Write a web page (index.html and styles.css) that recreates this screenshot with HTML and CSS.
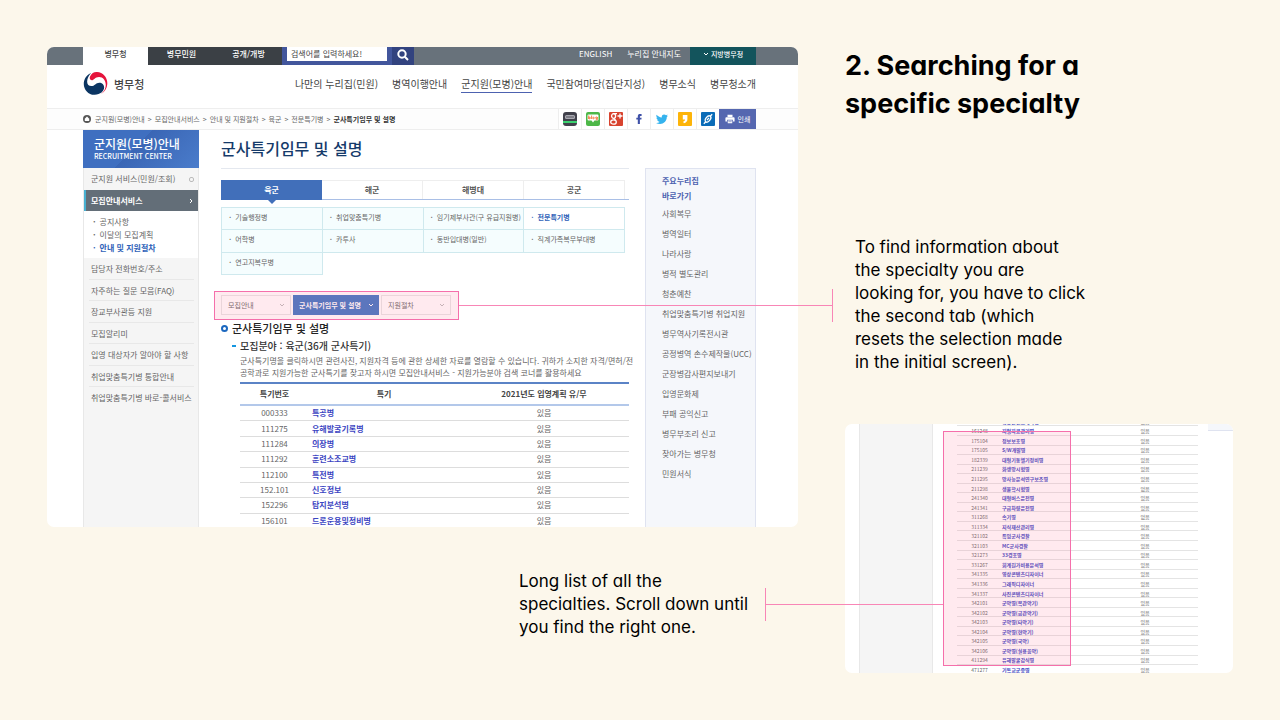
FILE: index.html
```html
<!DOCTYPE html>
<html lang="ko">
<head>
<meta charset="utf-8">
<title>Searching for a specific specialty</title>
<link rel="stylesheet" href="styles.css">
</head>
<body>
<main class="slide" lang="en">
  <div class="col-left">
    <div class="frame">
      <div class="card site" lang="ko">
        <div class="topbar">
          <nav class="top-tabs"><a class="on" href="#">병무청</a><a href="#">병무민원</a><a href="#">공개/개방</a></nav>
          <form class="search">
            <input type="text" aria-label="검색어" placeholder="검색어를 입력하세요!">
            <button type="button" aria-label="검색"><svg viewBox="0 0 12 12"><circle cx="5" cy="5" r="3.7"/><path d="M7.8 7.8L11 11"/></svg></button>
          </form>
          <nav class="util"><a href="#">ENGLISH</a><a href="#">누리집 안내지도</a></nav>
          <button class="region" type="button"><svg class="chev" viewBox="0 0 6 6"><path d="M1 2l2 2 2-2"/></svg>지방병무청</button>
        </div>
        <header class="masthead">
          <a class="logo" href="#">
            <svg viewBox="0 0 26 26"><path fill="#0b3562" d="M8.500 2.200C3.800 4 .8 8.600.8 13.400c0 6 4.800 11.200 10.900 11.400 6.200.2 10.300-3.800 10.300-7.800 0-2.900-2.300-4.900-5-4.900-3.800 0-4.700 3.600-8.400 3.600-2.500 0-4.300-2-4.300-4.600C4.300 7.800 6.200 4.400 8.500 2.200z"/><path fill="#e5143c" d="M7.300 5.800C9 2.200 11.500.8 14.600 1 20.600 1.300 25.300 6.300 25.300 12.600c0 4.900-2.500 9-6.500 11.400 3-2.800 4.900-5.800 4.900-9.500 0-4.700-2.900-8.300-7-8.300-4.500 0-5.200 3.400-7.600 3.400-1.900 0-2.500-1.900-1.800-3.800z"/></svg>
            <span>병무청</span>
          </a>
          <nav class="gnb"><a href="#">나만의 누리집(민원)</a><a href="#">병역이행안내</a><a class="on" href="#">군지원(모병)안내</a><a href="#">국민참여마당(집단지성)</a><a href="#">병무소식</a><a href="#">병무청소개</a></nav>
        </header>
        <div class="crumbbar">
          <svg class="home" viewBox="0 0 8 8"><circle cx="4" cy="4" r="4"/><path d="M4 1.600L1.800 3.700v2.200h4.400V3.700z"/></svg>
          <nav class="crumbs"><a href="#">군지원(모병)안내</a><i>&gt;</i><a href="#">모집안내서비스</a><i>&gt;</i><a href="#">안내 및 지원절차</a><i>&gt;</i><a href="#">육군</a><i>&gt;</i><a href="#">전문특기병</a><i>&gt;</i><b>군사특기임무 및 설명</b></nav>
          <div class="share">
            <button type="button" aria-label="SMS"><svg viewBox="0 0 14 14"><rect width="14" height="14" rx="3" fill="#41414b"/><rect x="2" y="3" width="10" height="4" rx="1.500" fill="#aaaab2"/><path d="M3 5h8" stroke="#55555e"/><rect y="9" width="14" height="2" fill="#3bd16f"/></svg></button>
            <button type="button" aria-label="Blog"><svg viewBox="0 0 14 14"><rect width="14" height="14" rx="2" fill="#4db748"/><path fill="#fff" d="M2.500 2.500h9q1 0 1 1v4q0 1-1 1H8.500L7 10.500 5.500 8.500h-3q-1 0-1-1v-4q0-1 1-1z"/><g fill="none" stroke="#f26522" stroke-width=".8"><path d="M2.700 3.500V7M5.600 3.500V7M11.300 5v2.800h-1.500"/><circle cx="3.600" cy="6" r=".8"/><circle cx="7.500" cy="6" r=".8"/><circle cx="10.400" cy="5.800" r=".8"/></g></svg></button>
            <button type="button" aria-label="Google+"><svg viewBox="0 0 14 14"><rect width="14" height="14" rx="1" fill="#d8432f"/><g fill="none" stroke="#fff" stroke-width="1.300"><ellipse cx="4.600" cy="4" rx="2" ry="2.300"/><ellipse cx="4.500" cy="10" rx="2.800" ry="2.200"/><path d="M4 1.600h4M5 6.300l1.500 2M11 1.500v5M8.500 4h5"/></g></svg></button>
            <button type="button" aria-label="Facebook"><svg viewBox="0 0 14 14"><path fill="#3f51a8" d="M5.800 12V7.600H4.300V5.700h1.500V4.300C5.800 2.600 6.700 2 8 2h1.600v1.900H8.700c-.6 0-.8.2-.8.7v1.100h1.700l-.2 1.900H7.900V12z"/></svg></button>
            <button type="button" aria-label="Twitter"><svg viewBox="0 0 14 14"><path fill="#35b3ee" d="M1.500 2.800c1.400 1.600 3.100 2.500 5.300 2.600-.3-1.800.8-3 2.300-3 .8 0 1.400.3 1.900.8l1.700-.6-1 1.500 1.400-.3-1.300 1.300c0 4.200-3.100 6.900-6.700 6.900-1.500 0-2.900-.4-4.100-1.100 1.400.1 2.600-.3 3.600-1-1.100-.1-2-.8-2.300-1.800h1C2.100 7.800 1.400 6.800 1.400 5.600l1.100.3C1.500 5.100 1 4 1.500 2.800z"/></svg></button>
            <button type="button" aria-label="KakaoStory"><svg viewBox="0 0 14 14"><rect width="14" height="14" rx="1" fill="#fdb409"/><path fill="#fff" d="M4.800 3h4.600v4.200c0 2-1.200 3.500-3.500 4l-.8-1.500c1.300-.4 1.900-1 2-2.100H4.800z"/></svg></button>
            <button type="button" aria-label="URL"><svg viewBox="0 0 14 14"><rect width="14" height="14" rx="1" fill="#0b6cb8"/><g fill="none" stroke="#fff" stroke-width="1.300"><ellipse cx="7" cy="7" rx="2.200" ry="3.600" transform="rotate(40 7 7)"/><path d="M6 8.200l2-2.400M9.200 4.300l2-2M4.800 9.700l-2 2"/></g></svg></button>
            <button class="print" type="button"><svg viewBox="0 0 12 12"><path fill="#fff" d="M3 1h6v2.500H3zM1.500 4h9q1 0 1 1v4H9.500V7h-7v2H.5V5q0-1 1-1zM3.300 7.800h5.400V11H3.300z"/><path d="M4 9.200h4" stroke="#5567b0" stroke-width=".7"/></svg>인쇄</button>
          </div>
        </div>
        <div class="body">
          <aside class="side">
            <div class="side-title"><strong>군지원(모병)안내</strong><small>RECRUITMENT CENTER</small></div>
            <a class="item first" href="#">군지원 서비스(민원/조회)<i class="ring"></i></a>
            <a class="item open" href="#">모집안내서비스<svg class="chev" viewBox="0 0 6 6"><path d="M2 1l2 2-2 2"/></svg></a>
            <ul class="sub"><li><a href="#">공지사항</a></li><li><a href="#">이달의 모집계획</a></li><li class="on"><a href="#">안내 및 지원절차</a></li></ul>
            <div class="rest"><a href="#">담당자 전화번호/주소</a><a href="#">자주하는 질문 모음(FAQ)</a><a href="#">장교부사관등 지원</a><a href="#">모집알리미</a><a href="#">입영 대상자가 알아야 할 사항</a><a href="#">취업맞춤특기병 통합안내</a><a href="#">취업맞춤특기병 바로-콜서비스</a></div>
          </aside>
          <section class="content">
            <h2 class="title">군사특기임무 및 설명</h2>
            <div class="forces"><button class="on" type="button">육군</button><button type="button">해군</button><button type="button">해병대</button><button type="button">공군</button></div>
            <div class="kinds"><a href="#">기술행정병</a><a href="#">취업맞춤특기병</a><a href="#">임기제부사관(구 유급지원병)</a><a class="on" href="#">전문특기병</a><a href="#">어학병</a><a href="#">카투사</a><a href="#">동반입대병(일반)</a><a href="#">직계가족복무부대병</a><a href="#">연고지복무병</a></div>
            <div class="steps"><button type="button">모집안내<svg class="chev" viewBox="0 0 6 6"><path d="M1 2l2 2 2-2"/></svg></button><button class="on" type="button">군사특기임무 및 설명<svg class="chev" viewBox="0 0 6 6"><path d="M1 2l2 2 2-2"/></svg></button><button type="button">지원절차<svg class="chev" viewBox="0 0 6 6"><path d="M1 2l2 2 2-2"/></svg></button></div>
            <h3>군사특기임무 및 설명</h3>
            <div class="detail">
              <h4>모집분야 : 육군(36개 군사특기)</h4>
              <p>군사특기명을 클릭하시면 관련사진, 지원자격 등에 관한 상세한 자료를 열람할 수 있습니다. 귀하가 소지한 자격/면허/전<br>공학과로 지원가능한 군사특기를 찾고자 하시면 모집안내서비스 - 지원가능분야 검색 코너를 활용하세요</p>
              <table class="list">
                <thead><tr><th class="c1">특기번호</th><th class="c2">특기</th><th class="c3">2021년도 입영계획 유/무</th></tr></thead>
                <tbody>
                <tr><td>000333</td><td><a href="#">특공병</a></td><td>있음</td></tr>
                <tr><td>111275</td><td><a href="#">유해발굴기록병</a></td><td>있음</td></tr>
                <tr><td>111284</td><td><a href="#">의장병</a></td><td>있음</td></tr>
                <tr><td>111292</td><td><a href="#">훈련소조교병</a></td><td>있음</td></tr>
                <tr><td>112100</td><td><a href="#">특전병</a></td><td>있음</td></tr>
                <tr><td>152.101</td><td><a href="#">신호정보</a></td><td>있음</td></tr>
                <tr><td>152296</td><td><a href="#">탐지분석병</a></td><td>있음</td></tr>
                <tr><td>156101</td><td><a href="#">드론운용및정비병</a></td><td>있음</td></tr>
                </tbody>
              </table>
            </div>
          </section>
          <aside class="quick">
            <strong>주요누리집<br>바로가기</strong>
            <a href="#">사회복무</a><a href="#">병역일터</a><a href="#">나라사랑</a><a href="#">병적 별도관리</a><a href="#">청춘예찬</a><a href="#">취업맞춤특기병 취업지원</a><a href="#">병무역사기록전시관</a><a href="#">공정병역 손수제작물(UCC)</a><a href="#">군장병감사편지보내기</a><a href="#">입영문화제</a><a href="#">부패 공익신고</a><a href="#">병무부조리 신고</a><a href="#">찾아가는 병무청</a><a href="#">민원서식</a>
          </aside>
        </div>
      </div>
      <div class="mark mark-tabs"></div>
      <div class="lead lead-tabs"></div>
    </div>
    <p class="note note-list">Long list of all the<br>specialties. Scroll down until<br>you find the right one.</p>
  </div>
  <div class="col-right">
    <h1>2. Searching for a<br>specific specialty</h1>
    <p class="note note-tabs">To find information about<br>the specialty you are<br>looking for, you have to click<br>the second tab (which<br>resets the selection made<br>in the initial screen).</p>
    <div class="frame">
      <div class="card scrolled" lang="ko">
        <div class="strip"></div>
        <div class="mini-wrap">
          <table class="mini">
            <tr><td class="m1">158107</td><td class="m2"><a href="#">영상콘텐츠제작병</a></td><td>있음</td></tr>
            <tr><td>161248</td><td><a href="#">지형자료관리병</a></td><td>있음</td></tr>
            <tr><td>175104</td><td><a href="#">정보보호병</a></td><td>있음</td></tr>
            <tr><td>175105</td><td><a href="#">S/W개발병</a></td><td>있음</td></tr>
            <tr><td>182339</td><td><a href="#">대형기동헬기정비병</a></td><td>있음</td></tr>
            <tr><td>211239</td><td><a href="#">화생방시험병</a></td><td>있음</td></tr>
            <tr><td>211295</td><td><a href="#">방사능분석연구보조병</a></td><td>있음</td></tr>
            <tr><td>211298</td><td><a href="#">생물학시험병</a></td><td>없음</td></tr>
            <tr><td>241340</td><td><a href="#">대형버스운전병</a></td><td>있음</td></tr>
            <tr><td>241341</td><td><a href="#">구급차량운전병</a></td><td>있음</td></tr>
            <tr><td>311268</td><td><a href="#">속기병</a></td><td>없음</td></tr>
            <tr><td>311334</td><td><a href="#">지식재산관리병</a></td><td>있음</td></tr>
            <tr><td>321102</td><td><a href="#">특임군사경찰</a></td><td>있음</td></tr>
            <tr><td>321103</td><td><a href="#">MC군사경찰</a></td><td>있음</td></tr>
            <tr><td>321273</td><td><a href="#">33경호병</a></td><td>있음</td></tr>
            <tr><td>331267</td><td><a href="#">회계원가비용분석병</a></td><td>있음</td></tr>
            <tr><td>341335</td><td><a href="#">영상콘텐츠디자이너</a></td><td>있음</td></tr>
            <tr><td>341336</td><td><a href="#">그래픽디자이너</a></td><td>있음</td></tr>
            <tr><td>341337</td><td><a href="#">사진콘텐츠디자이너</a></td><td>있음</td></tr>
            <tr><td>342101</td><td><a href="#">군악병(목관악기)</a></td><td>있음</td></tr>
            <tr><td>342102</td><td><a href="#">군악병(금관악기)</a></td><td>있음</td></tr>
            <tr><td>342103</td><td><a href="#">군악병(타악기)</a></td><td>있음</td></tr>
            <tr><td>342104</td><td><a href="#">군악병(현악기)</a></td><td>있음</td></tr>
            <tr><td>342105</td><td><a href="#">군악병(국악)</a></td><td>있음</td></tr>
            <tr><td>342106</td><td><a href="#">군악병(실용음악)</a></td><td>있음</td></tr>
            <tr><td>411294</td><td><a href="#">유해발굴감식병</a></td><td>있음</td></tr>
            <tr><td>471277</td><td><a href="#">기독교군종병</a></td><td>있음</td></tr>
          </table>
        </div>
        <div class="edge"></div>
      </div>
      <div class="mark mark-list"></div>
      <div class="lead lead-list"></div>
    </div>
  </div>
</main>
</body>
</html>
```

FILE: styles.css
```css
*, *::before, *::after { box-sizing: border-box; }
body { margin: 0; background: #fcf7eb; color: #000; }
h1, h2, h3, h4, p, ul { margin: 0; padding: 0; }
ul { list-style: none; }
a { color: inherit; text-decoration: none; }
i { font-style: normal; }
button, input { font: inherit; border: 0; padding: 0; margin: 0; color: inherit; }
svg { display: block; flex: none; }
.chev { width: 6px; height: 6px; fill: none; stroke: currentColor; stroke-width: 1; }

.slide {
  display: grid;
  grid-template-columns: 751fr 388fr;
  gap: 47px;
  min-height: 100vh;
  padding: 47px 47px 0;
  font-family: Inter, "Open Sans", sans-serif;
  font-feature-settings: "cv11";
}
.col-left, .col-right { display: flex; flex-direction: column; min-width: 0; }
h1 { font-size: 27px; line-height: 38px; font-weight: 700; }
.note { font-size: 17px; line-height: 23px; }
.note-tabs { margin: 113px 0 50px 10px; }
.note-list { align-self: flex-end; width: 279px; margin-top: 43px; }

.frame { position: relative; }
.card {
  overflow: hidden;
  border-radius: 7px;
  background: #fff;
  color: #666;
  font-family: "Noto Sans CJK KR", sans-serif;
  font-size: 8px;
  line-height: 12px;
}
.site { height: 480px; }

.topbar { display: flex; align-items: stretch; height: 18px; padding: 0 42px 0 36px; background: #68727b; color: #fff; }
.topbar a { display: flex; align-items: center; justify-content: center; padding-bottom: 4px; }
.top-tabs { display: flex; background: #3b4045; font-weight: 500; }
.top-tabs a { width: 67px; }
.top-tabs .on { width: 65px; background: #fff; color: #444; }
.search { display: flex; background: #42569c; }
.search input { width: 100px; height: 14px; margin: 0 5px; padding: 0 4px 2px; background: #fff; color: #444; }
.search input::placeholder { color: #444; opacity: 1; }
.search button { display: flex; align-items: center; justify-content: center; width: 22px; background: #32437f; }
.search svg { width: 12px; height: 12px; margin-bottom: 3px; fill: none; stroke: #fff; stroke-width: 2; }
.util { display: flex; gap: 15px; margin: 0 9px 0 auto; }
.region { display: flex; align-items: center; justify-content: center; gap: 2px; width: 66px; padding-bottom: 4px; background: #13545c; font-size: 7px; font-weight: 500; }

.masthead { display: flex; align-items: center; justify-content: space-between; height: 43px; padding: 0 42px 6px 36px; }
.logo { display: flex; align-items: center; gap: 6px; color: #444; font-size: 11px; font-weight: 500; }
.logo svg { width: 25px; height: 25px; }
.gnb { display: flex; gap: 14px; padding-top: 2px; color: #444; font-size: 10px; line-height: 16px; white-space: nowrap; }
.gnb a { border-bottom: 1px solid transparent; }
.gnb .on { border-color: #4d62b0; }

.crumbbar { display: flex; align-items: center; height: 22px; padding: 0 42px 0 36px; border: solid #eee; border-width: 1px 0; background: #fdfdfd; }
.home { width: 8px; height: 8px; margin-right: 4px; fill: #555; }
.home path { fill: #fff; }
.crumbs { display: flex; gap: 3px; font-size: 7px; white-space: nowrap; }
.crumbs b { color: #333; }
.share { display: flex; height: 20px; margin-left: auto; }
.share button { display: flex; align-items: center; justify-content: center; width: 23px; border-left: 1px solid #eee; background: #fff; }
.share svg { width: 14px; height: 14px; }
.share .print { width: 37px; gap: 3px; background: #5567b0; border: 0; color: #fff; font-size: 7px; }
.share .print svg { width: 10px; height: 10px; }

.body { display: grid; grid-template-columns: 116px minmax(0, 1fr) 111px; height: 397px; padding: 0 42px 0 36px; }
.side { border: solid #e8e8e8; border-width: 0 1px; background: #f5f5f5; white-space: nowrap; }
.side-title { display: flex; flex-direction: column; height: 38px; margin: 0 -1px; padding: 5px 0 0 11px; background: linear-gradient(135deg, #3f6fc0 45%, #3a66b5 45%, #4a7ccb); color: #fff; }
.side-title strong { font-size: 12px; line-height: 17px; font-weight: 500; }
.side-title small { font-size: 7px; line-height: 9px; font-weight: 500; }
.item { display: flex; align-items: center; justify-content: space-between; height: 22px; padding: 0 4px 0 7px; }
.ring { width: 5px; height: 5px; border: 1px solid #bbb; border-radius: 2px; }
.open { height: 21px; border-left: 2px solid #48b0d0; padding-left: 5px; background: #636e78; color: #fff; font-weight: 700; }
.sub { padding: 4px 0 4px 9px; background: #fff; line-height: 13px; }
.sub li { display: flex; gap: 4px; }
.sub li::before { content: "·"; font-weight: 700; }
.sub .on { color: #2f62b8; font-weight: 700; }
.rest { display: grid; grid-template-rows: repeat(7, 1fr); height: 151px; padding: 0 5px; }
.rest a { padding: 5px 2px 0; border-bottom: 1px solid #e8e8e8; }
.rest a:last-child { border: 0; }

.content { padding: 0 16px 0 22px; min-width: 0; }
.title { height: 39px; padding-top: 6px; border-bottom: 1px solid #e4e8ef; color: #153a6a; font-size: 16px; line-height: 24px; font-weight: 500; }
.forces, .kinds, .list { width: 100%; }
.forces { display: grid; grid-template-columns: repeat(4, 1fr); height: 20px; margin-top: 11px; padding-right: 4px; border-bottom: 1px solid #a9bfe6; }
.forces button { border: solid #eee; border-width: 1px 1px 0 0; background: #fff; font-weight: 700; color: #555; }
.forces .on { position: relative; margin-bottom: -1px; border: 0; background: #416fba; color: #fff; }
.forces .on::after { content: ""; position: absolute; left: 47px; top: 100%; border: solid transparent; border-width: 4px 4px 0; border-top-color: #416fba; }
.kinds { display: grid; grid-template-columns: repeat(4, 1fr); height: 68px; margin-top: 7px; padding: 1px 4px 0 1px; font-size: 7px; white-space: nowrap; }
.kinds a { display: flex; gap: 4px; margin: -1px 0 0 -1px; padding: 3px 0 0 7px; border: 1px solid #cfe9ee; background: #f5fdfe; }
.kinds a::before { content: "·"; font-weight: 700; }
.kinds .on { background: #fff; color: #2f62b8; font-weight: 700; }
.steps { display: flex; gap: 2px; height: 20px; margin-top: 20px; font-size: 7px; }
.steps button { display: flex; align-items: center; justify-content: space-between; width: 70px; padding: 0 5px 0 6px; border: 1px solid #e6e6e6; background: #fff; }
.steps .chev { color: #bbb; }
.steps .on { width: 86px; border: 0; background: #3b74c3; color: #fff; font-weight: 700; white-space: nowrap; }
.steps .on .chev { color: #fff; }
h3 { display: flex; align-items: center; gap: 4px; margin-top: 4px; color: #222; font-size: 11px; line-height: 18px; font-weight: 500; }
h3::before { content: ""; width: 7px; height: 7px; border: 2px solid #1c68bf; border-radius: 50%; }
.detail { padding-left: 19px; }
h4 { position: relative; color: #333; font-size: 10px; line-height: 17px; font-weight: 500; }
h4::before { content: ""; position: absolute; left: -8px; top: 8px; width: 4px; height: 2px; background: #1496e0; }
.detail p { margin: 1px 0 3px; white-space: nowrap; }
.list { border-collapse: collapse; table-layout: fixed; height: 147px; border-top: 2px solid #5b83c6; text-align: center; }
.list th { height: 22px; padding: 0; border-bottom: 2px solid #b3c8ea; color: #444; font-weight: 700; }
.list td { padding: 0; border-bottom: 1px solid #ddd; }
.c1 { width: 69px; }
.c2 { width: 150px; }
.list td:nth-child(2) { padding-left: 3px; text-align: left; }
.list td a, .mini a { color: #3c45c2; font-weight: 700; }

.quick { display: flex; flex-direction: column; margin-top: 38px; padding: 4px 0 0 16px; border: solid #dfe3f0; border-width: 1px 1px 0; background: #f5f7fb; white-space: nowrap; line-height: 20px; }
.quick strong { margin-bottom: 1px; color: #4d62b0; line-height: 15px; }

.mark { position: absolute; border: 1px solid #f56fab; background: rgba(255, 130, 160, 0.17); }
.mark-tabs { left: 167px; top: 244px; width: 245px; height: 29px; }
.mark-list { left: 98px; top: 7px; width: 128px; height: 235px; }
.lead { position: absolute; height: 33px; background: linear-gradient(#f886b6, #f886b6) center / 100% 1px no-repeat; }
.lead-tabs { left: 412px; right: -35px; top: 242px; border-right: 1px solid #f886b6; }
.lead-list { left: -80px; width: 178px; top: 164px; border-left: 1px solid #f886b6; }

.scrolled { display: grid; grid-template-columns: 88px minmax(0, 1fr) 25px; height: 249px; font-size: 5px; line-height: 7px; }
.strip { margin-left: 14px; border: solid #e8e8e8; border-width: 0 1px; background: #f5f5f5; }
.mini-wrap { padding: 0 10px 0 24px; }
.mini { width: 100%; height: 258px; margin-top: -7px; border-collapse: collapse; table-layout: fixed; text-align: center; }
.mini td { padding: 0; border-bottom: 1px solid #e4e4e4; }
.m1 { width: 45px; }
.m2 { width: 90px; }
.mini td:nth-child(2) { text-align: left; }
.edge { height: 7px; border-bottom: 1px solid #dfe3f0; background: #f5f7fb; }
```
